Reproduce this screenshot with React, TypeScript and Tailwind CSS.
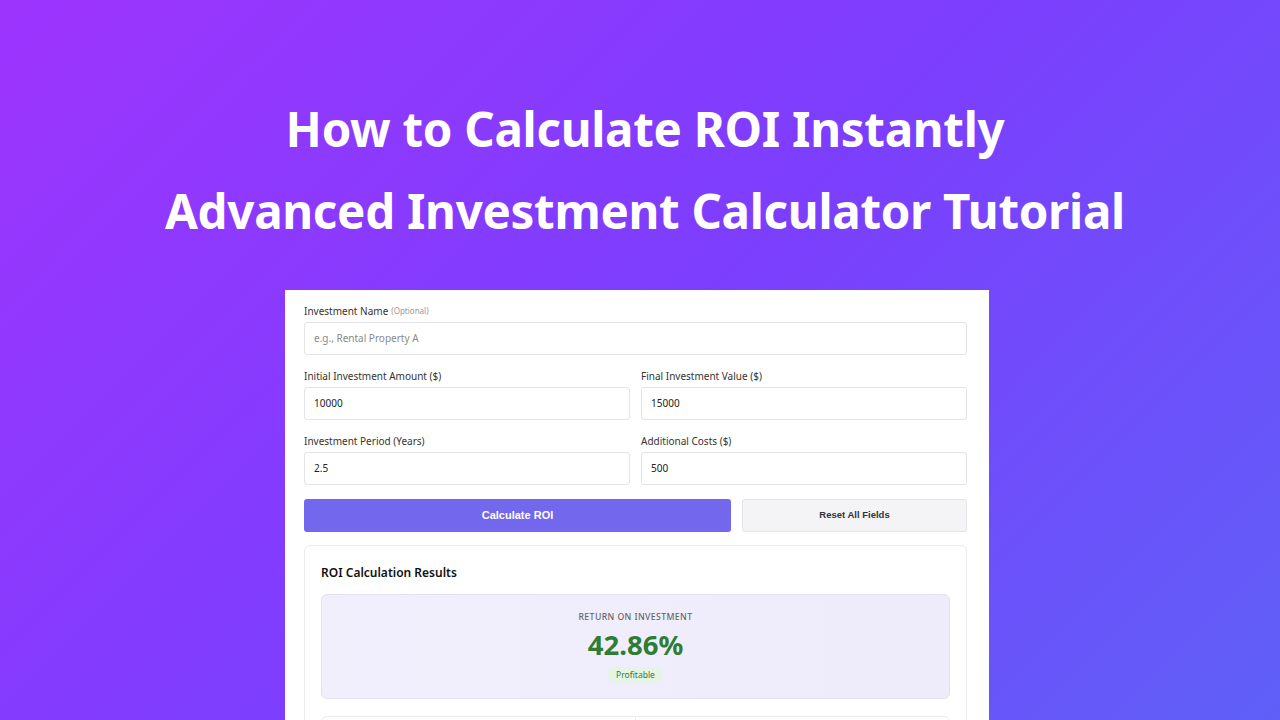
import React from "react";

const sans = { fontFamily: '"Noto Sans", "Open Sans", sans-serif' };
const arial = { fontFamily: '"Liberation Sans", Arial, sans-serif' };

function Field({ label, value, placeholder, optional }: { label: string; value?: string; placeholder?: string; optional?: boolean }) {
  return (
    <div className="flex flex-col">
      <div className="h-[14px] flex items-center text-[10px] text-[#333] mb-[4px]">
        <span>{label}</span>
        {optional && <span className="ml-[3px] text-[8px] text-[#999]">(Optional)</span>}
      </div>
      <div className="h-[33px] border border-[#e3e3e8] rounded-[3px] bg-white flex items-center px-[9px] text-[10px]">
        {value ? <span className="text-[#222]">{value}</span> : <span className="text-[#8a8a8a]">{placeholder}</span>}
      </div>
    </div>
  );
}

export default function App() {
  return (
    <div
      className="w-[1280px] h-[720px] overflow-hidden flex flex-col items-center bg-[linear-gradient(135deg,#9d34fe_0%,#7c3efd_50%,#5f60f8_100%)]"
      style={sans}
    >
      <div className="pt-[88px] ml-[10px] flex flex-col items-center text-white font-bold text-[47.5px] leading-[82px] tracking-[-0.3px]">
        <div>How to Calculate ROI Instantly</div>
        <div>Advanced Investment Calculator Tutorial</div>
      </div>
      <div className="mt-[38px] mr-[6px] w-[704px] bg-white pl-[19px] pr-[22px] pt-[14px] flex-1 flex flex-col gap-[14px]">
        <Field label="Investment Name" placeholder="e.g., Rental Property A" optional />
        <div className="grid grid-cols-2 gap-x-[11px]">
          <Field label="Initial Investment Amount ($)" value="10000" />
          <Field label="Final Investment Value ($)" value="15000" />
        </div>
        <div className="grid grid-cols-2 gap-x-[11px]">
          <Field label="Investment Period (Years)" value="2.5" />
          <Field label="Additional Costs ($)" value="500" />
        </div>
        <div className="flex gap-[11px] h-[33px]" style={arial}>
          <div className="w-[427px] rounded-[3px] bg-[#7367ee] text-white font-bold text-[11px] flex items-center justify-center">
            Calculate ROI
          </div>
          <div className="flex-1 rounded-[3px] bg-[#f4f4f6] border border-[#e3e3e8] text-[#333] font-bold text-[9.5px] flex items-center justify-center">
            Reset All Fields
          </div>
        </div>
        <div className="-mt-[1px] border border-[#ececf0] rounded-[6px] px-[16px] pt-[19px] flex flex-col">
          <div className="text-[12px] font-semibold text-[#111] leading-[16px]">ROI Calculation Results</div>
          <div className="mt-[13px] h-[105px] rounded-[6px] border border-[#e2e0f2] bg-[linear-gradient(90deg,#f1effc,#eeecfb)] flex flex-col items-center">
            <div className="mt-[16px] text-[8.7px] tracking-[0.4px] text-[#666] font-medium leading-[12px]">RETURN ON INVESTMENT</div>
            <div className="mt-[5px] text-[27.5px] font-bold text-[#2e7d32] leading-[34px]">42.86%</div>
            <div className="mt-[5px] px-[8px] h-[16px] rounded-full bg-[#e6f4e6] text-[#2e7d32] text-[8.5px] flex items-center">Profitable</div>
          </div>
          <div className="mt-[17px] h-[30px] rounded-t-[6px] border border-[#ececf0] grid grid-cols-2">
            <div className="border-r border-[#ececf0]" />
            <div />
          </div>
        </div>
      </div>
    </div>
  );
}
